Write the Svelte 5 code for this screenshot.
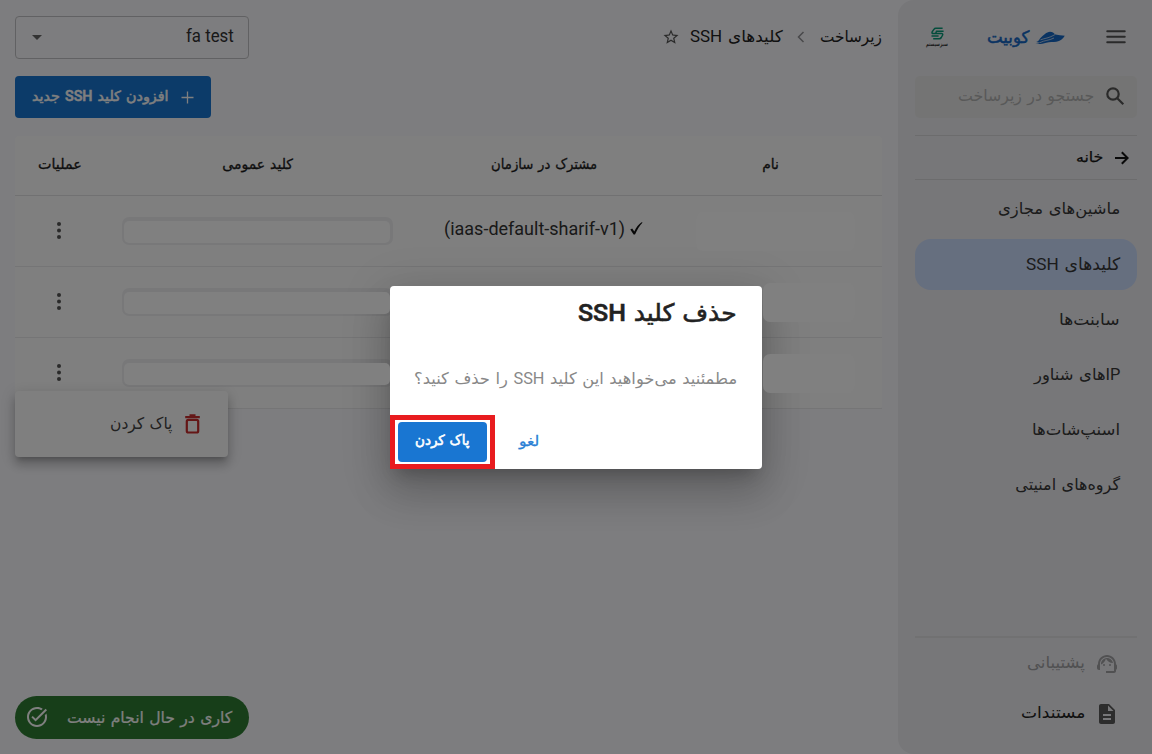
<script>
  const nav = [
    { label: 'ماشین‌های مجازی', w: 122 },
    { label: 'کلیدهای SSH', w: 94, active: true },
    { label: 'سابنت‌ها', w: 61 },
    { label: 'IPهای شناور', w: 86 },
    { label: 'اسنپ‌شات‌ها', w: 88 },
    { label: 'گروه‌های امنیتی', w: 105 }
  ];
  const rows = [
    { shared: '(iaas-default-sharif-v1)' },
    { shared: '', narrow: true },
    { shared: '', narrow: true }
  ];

  // Condenses or widens a label so that it fills its column width.
  function fit(node, width) {
    const apply = () => {
      node.style.transform = 'none';
      const natural = node.offsetWidth;
      if (natural) node.style.transform = `scaleX(${width / natural})`;
    };
    apply();
    document.fonts?.ready.then(apply);
  }
</script>

{#snippet label(text, w)}
  <span class="fit" style:width="{w}px"><span class="fit-in" use:fit={w}>{text}</span></span>
{/snippet}

<div class="page" dir="rtl">
  <aside class="side">
    <header class="brand">
      <svg class="menu" viewBox="0 0 20 14"><path d="M1.2 1.2h17.6M1.2 6.7h17.6M1.2 12.2h17.6" /></svg>
      <div class="logo">
        <svg class="boat" viewBox="0 0 30 14">
          <path d="M5 7.600C8.500 4.300 11.500 1 15 .8c2.500 0 3.800 1.200 5.300 2.700 3 .6 6.300.7 9.500 1.300-2 3.200-4.600 5.400-8.500 6-3.500.5-6.500 0-10 .9C8 12.500 4 13.600.5 12.800c2-.2 3.500-.7 5-1.400-1.500.2-3 .2-4.300-.3 1.800-.5 2.800-1.900 3.800-3.500z" />
          <path class="cut" d="M5 11.600c5-2.600 8.500-1.800 14-4.600M5.500 8.800c4-1.500 8.500-1.600 14.500-5.200" />
        </svg>
        <span class="brand-name">{@render label('کوبیت', 42)}</span>
      </div>
      <div class="partner">
        <svg viewBox="0 0 15 13"><path d="M12.600 1.200H5.800Q4.600 1.200 3.900 2.300L2.300 4.700Q1.400 6.500 3.200 6.500H5M13.600 4.200H6.500L5.600 6.500H11.300q2.200 0 1.100 2L11.300 10.500q-.7 1.200-1.900 1.200H3.200M1.500 9H8.600" /></svg>
        <span class="partner-name">{@render label('سبزسیستم', 22)}</span>
      </div>
    </header>

    <div class="search">
      <svg class="mag" viewBox="0 0 19 19"><circle cx="7" cy="7" r="5.700" /><path d="M11.300 11.300l6 6" /></svg>
      <span class="up">{@render label('جستجو در زیرساخت', 136)}</span>
    </div>

    <div class="home">
      <svg viewBox="0 0 15 14"><path d="M1 7h12.500M7.800 1.200L13.600 7l-5.800 5.800" /></svg>
      {@render label('خانه', 27)}
    </div>

    <nav>
      {#each nav as item}
        <div class="item" class:active={item.active}>{@render label(item.label, item.w)}</div>
      {/each}
    </nav>

    <footer class="links">
      <div class="link faded">
        <svg viewBox="0 0 24 24"><path d="M21 12.220C21 6.730 16.740 3 12 3c-4.690 0-9 3.650-9 9.280-.6.340-1 .980-1 1.720v2c0 1.100.9 2 2 2h1v-6.100c0-3.870 3.130-7 7-7s7 3.130 7 7V19h-8v2h8c1.100 0 2-.9 2-2v-1.220c.590-.310 1-.920 1-1.640v-2.300c0-.7-.410-1.310-1-1.620z" /><circle cx="9" cy="13" r="1" /><circle cx="15" cy="13" r="1" /><path d="M18 11.030C17.520 8.180 15.040 6 12.050 6c-3.030 0-6.290 2.510-6.030 6.450 2.470-1.010 4.330-3.210 4.860-5.890 1.310 2.630 4 4.440 7.120 4.470z" /></svg>
        {@render label('پشتیبانی', 58)}
      </div>
      <div class="link">
        <svg viewBox="0 0 24 24"><path d="M14 2H6c-1.100 0-2 .9-2 2v16c0 1.100.9 2 2 2h12c1.100 0 2-.9 2-2V8l-6-6zm2 16H8v-2h8v2zm0-4H8v-2h8v2zm-3-5V3.500L18.500 9H13z" /></svg>
        {@render label('مستندات', 64)}
      </div>
    </footer>
  </aside>

  <main>
    <div class="topbar">
      <div class="crumbs">
        {@render label('زیرساخت', 62)}
        <svg class="chev" viewBox="0 0 8 12"><path d="M6.500 1L1.500 6l5 5" /></svg>
        {@render label('کلیدهای SSH', 93)}
        <svg class="star" viewBox="0 0 24 24"><path d="M22 9.240l-7.190-.620L12 2 9.190 8.630 2 9.240l5.460 4.730L5.820 21 12 17.270 18.180 21l-1.630-7.030L22 9.240zM12 15.400l-3.760 2.270 1-4.280-3.320-2.880 4.380-.380L12 6.100l1.710 4.040 4.380.380-3.320 2.880 1 4.280L12 15.400z" /></svg>
      </div>
      <div class="select">
        {@render label('fa test', 48)}
        <i class="caret"></i>
      </div>
    </div>

    <button class="add">
      <svg viewBox="0 0 13 13"><path d="M6.500.5v12M.5 6.500h12" /></svg>
      <span class="up">{@render label('افزودن کلید SSH جدید', 137)}</span>
    </button>

    <section class="table">
      <div class="tr head">
        <div>{@render label('نام', 17)}</div>
        <div>{@render label('مشترک در سازمان', 106)}</div>
        <div>{@render label('کلید عمومی', 71)}</div>
        <div>{@render label('عملیات', 44)}</div>
      </div>
      {#each rows as row}
        <div class="tr">
          <div class="name"><span class="blank" class:narrow={row.narrow}></span></div>
          <div class="shared">
            {#if row.shared}
              <svg viewBox="0 0 13 13"><path d="M.3 7.500l1.900-1L4.300 9.500C6.300 5.500 8.600 2.300 11.600.3l1 .3C9.600 3.500 7.300 7.500 5 12.600H3.600z" /></svg>
              <span dir="ltr">{@render label(row.shared, 181)}</span>
            {/if}
          </div>
          <div><span class="key"><span class="fill"></span></span></div>
          <div class="ops"><svg class="dots" viewBox="0 0 4 17"><circle cx="2" cy="2" r="2" /><circle cx="2" cy="8.500" r="2" /><circle cx="2" cy="15" r="2" /></svg></div>
        </div>
      {/each}
    </section>

    <div class="toast">
      {@render label('کاری در حال انجام نیست', 165)}
      <svg viewBox="0 0 24 24"><path d="M22 5.180L10.590 16.600l-4.240-4.240 1.410-1.410 2.830 2.830 10-10L22 5.180zm-2.210 5.040c.130.570.210 1.170.210 1.780 0 4.420-3.580 8-8 8s-8-3.580-8-8 3.580-8 8-8c1.580 0 3.040.460 4.280 1.250l1.440-1.440C16.100 2.670 14.130 2 12 2 6.480 2 2 6.480 2 12s4.480 10 10 10 10-4.480 10-10c0-1.190-.220-2.330-.6-3.390l-1.610 1.610z" /></svg>
    </div>
  </main>

  <div class="popover">
    <svg viewBox="0 0 15 20"><path d="M.2 3.200h14.600M4.500 1.300h6" /><rect x="1.800" y="5.900" width="11.400" height="12.600" rx="1.500" /></svg>
    {@render label('پاک کردن', 62)}
  </div>

  <div class="scrim"></div>
  <div class="shade"></div>

  <div class="dialog">
    <h2>{@render label('حذف کلید SSH', 159)}</h2>
    <p>{@render label('مطمئنید می‌خواهید این کلید SSH را حذف کنید؟', 323)}</p>
    <div class="actions">
      <span class="cancel">{@render label('لغو', 20)}</span>
      <div class="ring"><button class="confirm">{@render label('پاک کردن', 55)}</button></div>
    </div>
  </div>
</div>

<style>
  :global(body) { margin: 0; overflow: hidden; }
  .page {
    position: relative;
    display: flex;
    width: 1152px;
    height: 754px;
    overflow: hidden;
    background: #fafafe;
    color: #222;
    font: 16px/24px Roboto, "DejaVu Sans", sans-serif;
    word-spacing: 1.5px;
  }
  .page * { box-sizing: border-box; }
  svg { display: block; flex: none; fill: currentColor; }
  button { border: 0; font: inherit; margin: 0; word-spacing: inherit; }
  .fit { display: inline-flex; flex: none; justify-content: flex-start; white-space: nowrap; }
  .fit-in { flex: none; transform-origin: 100% 50%; }
  [dir='ltr'] .fit-in { transform-origin: 0 50%; }
  .up { display: flex; padding-bottom: 3px; }

  .side {
    display: flex;
    flex-direction: column;
    width: 254px;
    flex: none;
    padding: 0 15px 0 17px;
    border-top-left-radius: 16px;
    border-bottom-left-radius: 16px;
    background: #eeeef2;
  }
  .brand { display: flex; align-items: center; height: 76px; padding: 0 11px 2px 0; }
  .menu { width: 20px; height: 14px; fill: none; stroke: #555; stroke-width: 1.900; stroke-linecap: round; }
  .logo { display: flex; align-items: center; gap: 6px; margin-right: 41px; color: #1467c4; }
  .boat { width: 30px; height: 14px; margin-top: 2px; }
  .boat .cut { fill: none; stroke: #eeeef2; stroke-width: .7; }
  .brand-name { font-size: 17px; display: flex; -webkit-text-stroke: .5px; }
  .partner { display: flex; flex-direction: column; align-items: center; margin-right: 39px; }
  .partner svg { width: 15px; height: 13px; fill: none; stroke: #079a78; stroke-width: 1.500; }
  .partner-name { display: flex; font-size: 6px; line-height: 7px; font-weight: 700; color: #333; }
  .search { display: flex; align-items: center; gap: 12px; height: 42px; padding-right: 12px; border-radius: 5px; background: #e9e9e8; color: #b2b2b2; }
  .mag { width: 19px; height: 19px; margin-bottom: 1px; fill: none; stroke: #555; stroke-width: 2.200; }
  .home { display: flex; align-items: center; gap: 11px; height: 45px; margin-top: 17px; padding: 0 8px 0 0; border: solid #d8d8da; border-width: 1px 0; font-size: 14px; color: #151515; -webkit-text-stroke: .25px; }
  .home .fit { margin-bottom: 2px; }
  .home svg { width: 15px; height: 14px; fill: none; stroke: #151515; stroke-width: 2; }
  nav { display: flex; flex-direction: column; gap: 4px; margin-top: 4px; }
  .item { display: flex; align-items: center; height: 51px; padding: 1px 17px 0; border-radius: 16px; color: #383838; }
  .item:first-child { padding: 0 17px 1px; }
  .item.active { background: #ccdeff; padding: 0 17px 2px; font-size: 17px; }
  .links { margin-top: auto; height: 118px; padding: 0 19px 0 0; border-top: 2px solid #e2e2e5; }
  .link { display: flex; align-items: center; gap: 10px; height: 50px; padding-top: 1px; color: #222; }
  .link .fit { margin-bottom: 2px; }
  .link svg { width: 24px; height: 24px; margin-right: -1px; color: #5a5a5a; }
  .link.faded, .faded svg { color: #a2a2a5; }
  .link:not(.faded) { padding-top: 2px; }

  main { display: flex; flex-direction: column; align-items: flex-end; flex: 1; padding: 16px 16px 15px 15px; }
  .topbar { display: flex; justify-content: space-between; width: 100%; }
  .crumbs { display: flex; align-items: center; height: 42px; }
  .chev { width: 8px; height: 12px; margin: 0 15px 0 14px; fill: none; stroke: #929295; stroke-width: 1.500; }
  .star { width: 18px; height: 18px; margin-right: 10px; color: #555; }
  .select { display: flex; align-items: center; justify-content: space-between; width: 234px; height: 43px; padding: 0 14px 3px 16px; border: 1px solid #c3c3c6; border-radius: 4px; font-size: 17.500px; word-spacing: 0; color: #333; }
  .caret { border: solid transparent; border-width: 5px 5px 0; border-top-color: #666; margin-top: 3px; }
  .add { display: flex; align-items: center; gap: 12px; width: 196px; height: 42px; margin-top: 17px; padding: 0 17px 0 0; border-radius: 4px; background: #1976d2; color: #fff; font-size: 14px; font-weight: 500; -webkit-text-stroke: .5px; }
  .add svg { width: 13px; height: 13px; margin-top: 1px; fill: none; stroke: #fff; stroke-width: 1.300; }
  .table { width: 867px; margin-top: 18px; background: #fff; border-radius: 4px; }
  .tr { display: grid; grid-template-columns: 223px 230px 343px 53px; height: 71px; border-bottom: 1px solid #eaeaec; }
  .tr > div { display: flex; align-items: center; justify-content: center; }
  .head { height: 60px; font-size: 14px; color: #1d1d1d; border-bottom-color: #e2e2e4; -webkit-text-stroke: .3px; }
  .head > div { padding-bottom: 4px; }
  .tr > .name { justify-content: flex-start; padding-right: 27px; }
  .blank { position: relative; z-index: 3; width: 159px; height: 39px; border-radius: 7px; background: #808080; }
  .narrow { width: 92px; }
  .tr > .shared { gap: 5px; padding: 0 1px 5px 0; font-size: 17.500px; color: #333; }
  .shared svg { width: 13px; height: 13px; color: #111; }
  .shared span { display: flex; }
  .key { display: flex; width: 271px; height: 28px; margin: 0; padding: 4px 3px 2px 2px; border-radius: 7px; background: #f1f1f3; }
  .fill { position: relative; z-index: 3; flex: 1; border-radius: 5px; background: #808080; }
  .tr > .ops { padding: 0 1px 1px 0; }
  .dots { width: 4px; height: 17px; color: #555; }
  .toast { display: flex; align-items: center; gap: 18px; width: 234px; height: 43px; margin-top: auto; padding-right: 17px; border-radius: 22px; background: #2e7d32; color: #fff; -webkit-text-stroke: .2px; }
  .toast svg { width: 24px; height: 24px; margin-bottom: 1px; }

  .popover { position: absolute; left: 15px; top: 391px; display: flex; align-items: center; gap: 13px; width: 213px; height: 66px; padding-right: 28px; border-radius: 4px; background: #fff; color: #444; z-index: 1; box-shadow: 0 5px 5px -3px rgba(0,0,0,.2), 0 8px 10px 1px rgba(0,0,0,.14), 0 3px 14px 2px rgba(0,0,0,.12); }
  .popover svg { width: 15px; height: 20px; fill: none; stroke: #c92c2c; stroke-width: 2.200; }
  .scrim { position: absolute; inset: 0; z-index: 2; background: rgba(0,0,0,.5); }
  .shade, .dialog { position: absolute; left: 390px; top: 286px; width: 372px; height: 183px; border-radius: 4px; }
  .shade { z-index: 2; box-shadow: 0 11px 15px -7px rgba(0,0,0,.2), 0 24px 38px 3px rgba(0,0,0,.14), 0 9px 46px 8px rgba(0,0,0,.12); }
  .dialog { z-index: 4; display: flex; flex-direction: column; background: #fff; }
  h2 { display: flex; align-items: center; height: 54px; margin: 0; padding: 0 25px 0 0; font-size: 24px; font-weight: 500; color: #222; -webkit-text-stroke: .6px; }
  p { display: flex; margin: 27px 25px 0; color: #888; }
  .actions { display: flex; align-items: center; justify-content: flex-end; gap: 24px; margin-top: auto; font-size: 14px; }
  .cancel { display: flex; color: #2a80d5; -webkit-text-stroke: .3px; margin-bottom: 3px; }
  .ring { border: 5px solid #e81c1f; width: 105px; height: 54px; padding: 2px 3px; display: flex; }
  .confirm { flex: 1; display: flex; align-items: center; justify-content: center; padding: 0 0 4px; border-radius: 4px; background: #1976d2; color: #fff; -webkit-text-stroke: .6px; }
</style>
